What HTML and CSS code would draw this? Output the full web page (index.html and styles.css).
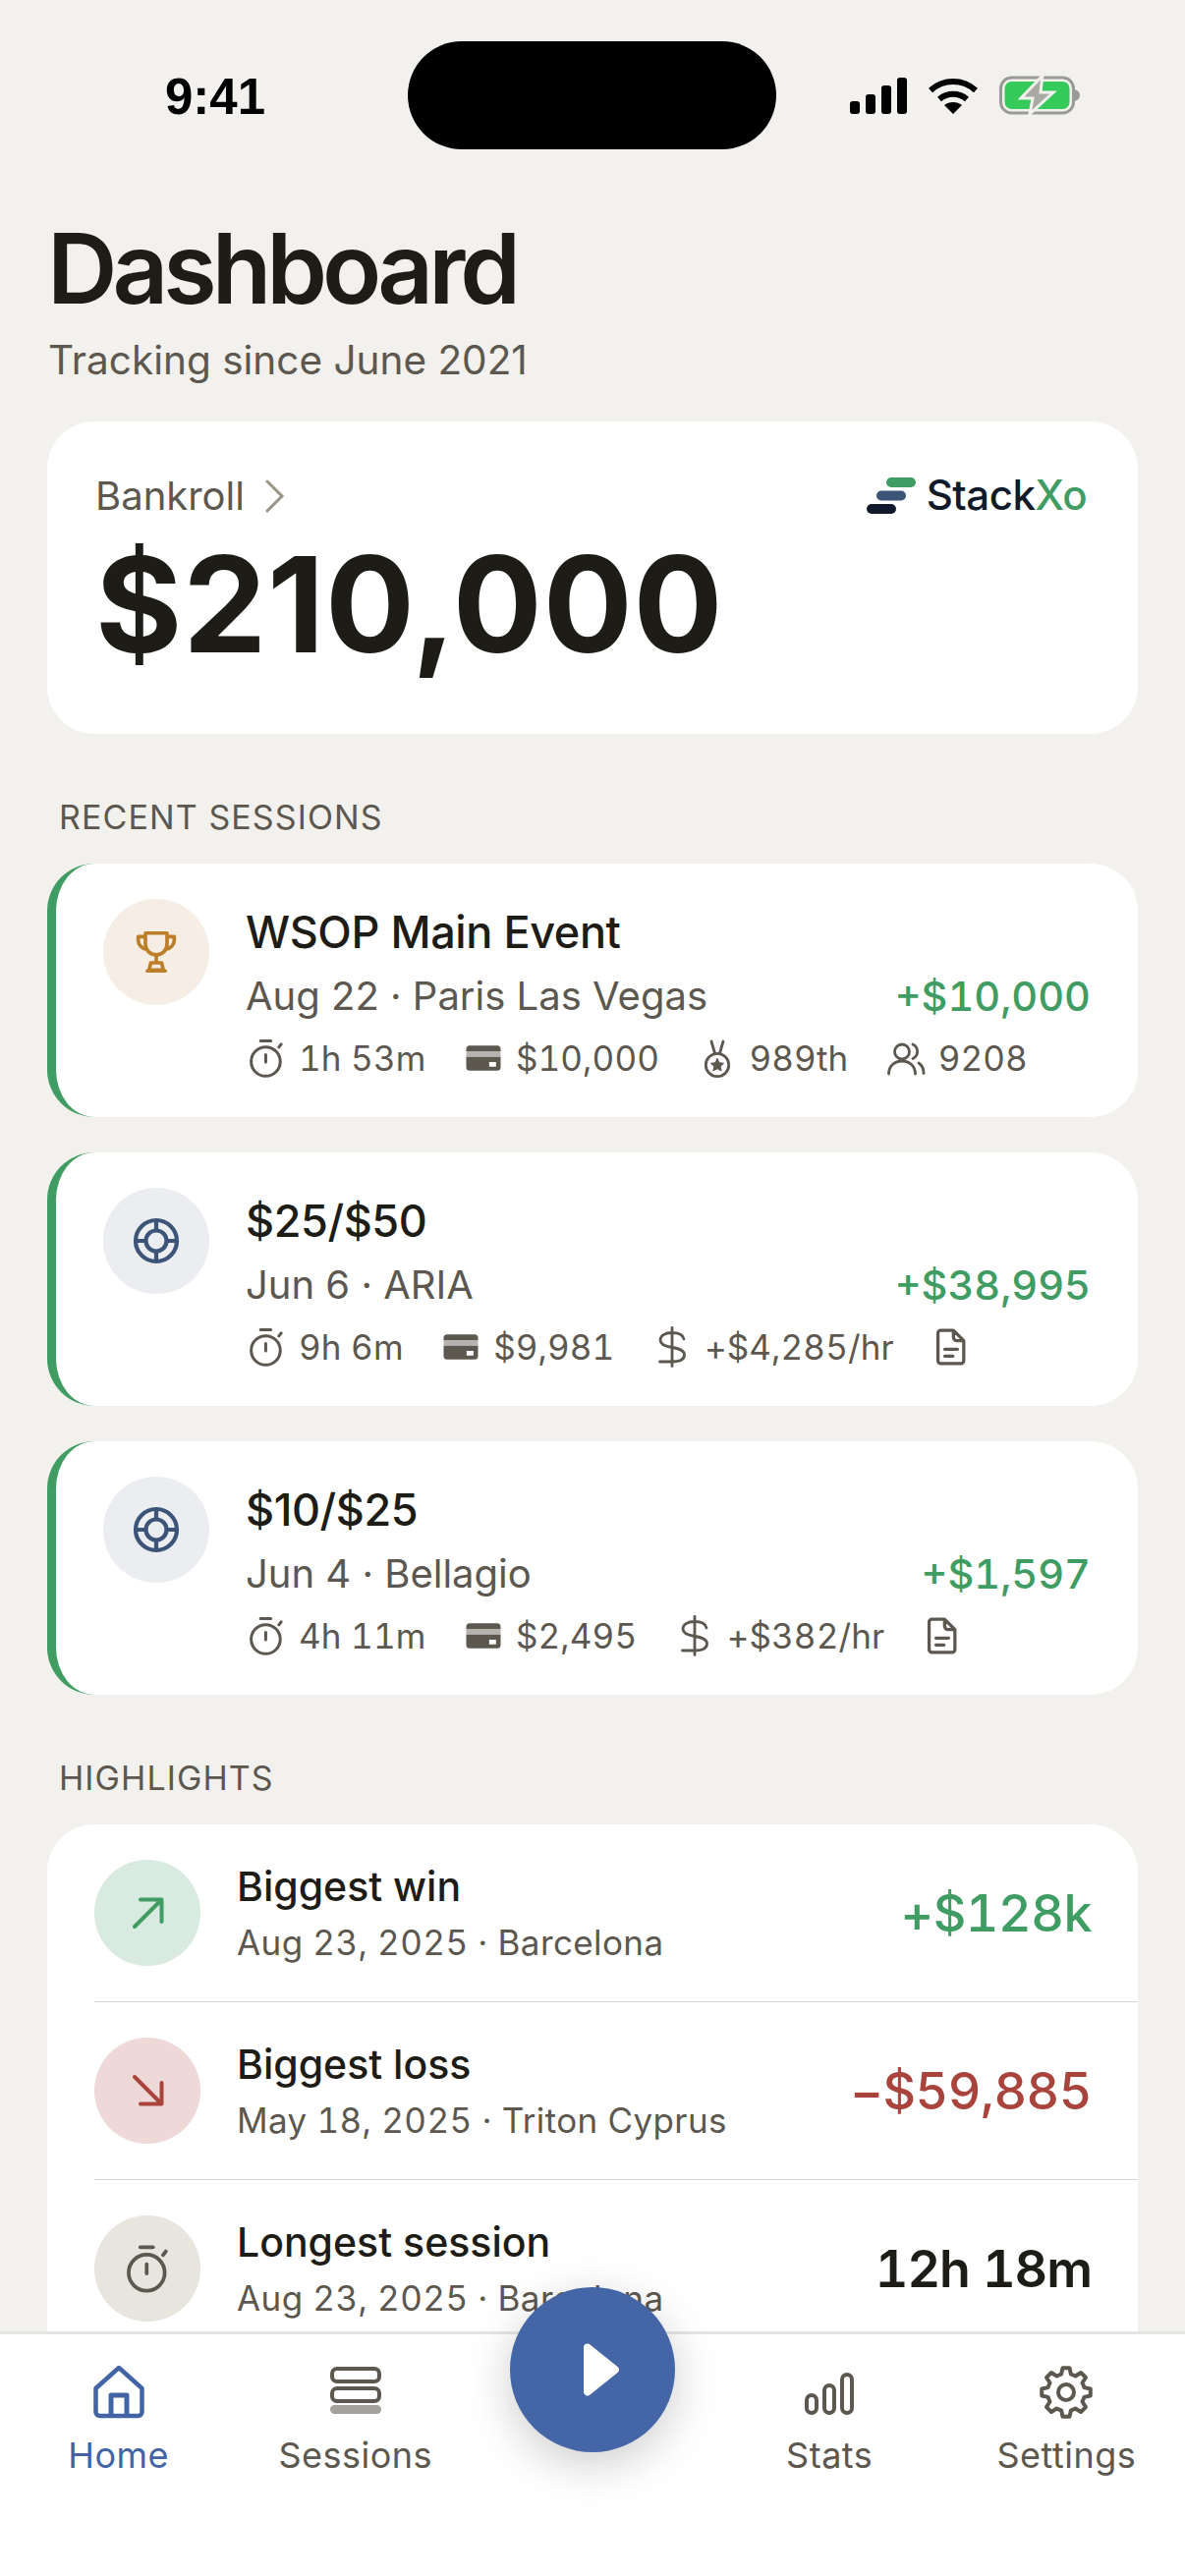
FILE: index.html
```html
<!DOCTYPE html>
<html lang="en">
<head>
  <meta charset="UTF-8" />
  <meta name="viewport" content="width=device-width, initial-scale=1.0"/>
  <title>Dashboard</title>
  <link rel="stylesheet" href="styles.css">
</head>
<body>
  <svg class="sprite" width="0" height="0">
    <symbol id="i-watch" viewBox="0 0 36 36" fill="none" stroke="currentColor" stroke-width="2.6" stroke-linecap="round">
      <circle cx="17.500" cy="21" r="12.700"/><path d="M13 3h9M17.500 15v6.500M29 8.500l2-2.600"/>
    </symbol>
    <symbol id="i-card" viewBox="0 0 36 36">
      <path fill="currentColor" fill-rule="evenodd" d="M3 10a3 3 0 0 1 3-3h24a3 3 0 0 1 3 3v2H3zM3 17h30v9a3 3 0 0 1-3 3H6a3 3 0 0 1-3-3zM23 21.500v4h6v-4z"/>
      <path fill="currentColor" opacity=".45" d="M3 12h30v5H3z"/>
    </symbol>
    <symbol id="i-medal" viewBox="0 0 42 42" fill="none" stroke="currentColor" stroke-width="2.800" stroke-linejoin="round" stroke-linecap="round">
      <path d="M15 4l3.500 12M27 4l-3.500 12"/><circle cx="21" cy="28" r="11.700"/>
      <path fill="currentColor" stroke-width="1" d="M21 21.500l2 4.200 4.500.6-3.300 3.100.9 4.500-4.100-2.200-4.100 2.200.9-4.500-3.300-3.100 4.500-.6z"/>
    </symbol>
    <symbol id="i-users" viewBox="0 0 42 42" fill="none" stroke="currentColor" stroke-width="2.800" stroke-linecap="round" stroke-linejoin="round">
      <circle cx="17" cy="14.500" r="7.500"/><path d="M3.500 37c0-8 6-13 13.500-13s13.500 5 13.500 13M28 7a8 8 0 0 1 0 14.500M34 26c3 2 5 6 5 10.500"/>
    </symbol>
    <symbol id="i-dollar" viewBox="0 0 36 42" fill="none" stroke="currentColor" stroke-width="2.800" stroke-linecap="round">
      <path d="M30 13c-1-4.500-5.500-6.500-12-6.500-7.500 0-12 3-12 7.500 0 5 5.500 6.500 12 7.500s12.500 2.500 12.500 7.500-5.500 7-12.500 7H5.500M18 1.500v39"/>
    </symbol>
    <symbol id="i-note" viewBox="0 0 36 36" fill="none" stroke="currentColor" stroke-width="2.800" stroke-linecap="round" stroke-linejoin="round">
      <path d="M9 3.500h11l9 9V30a2.500 2.500 0 0 1-2.500 2.500H9A2.500 2.500 0 0 1 6.500 30V6A2.500 2.500 0 0 1 9 3.500zM20 3.500v6a3 3 0 0 0 3 3h6M12.500 20h11M12.500 26h7"/>
    </symbol>
    <symbol id="i-target" viewBox="0 0 48 48" fill="none" stroke="currentColor" stroke-width="4.200">
      <circle cx="24" cy="24" r="21"/><circle cx="24" cy="24" r="10.500"/>
      <path d="M24 4v10M24 34v10M4 24h10M34 24h10"/>
    </symbol>
  </svg>

  <div class="phone">
    <header class="status-bar">
      <span class="status-time">9:41</span>
      <div class="island"></div>
      <div class="status-icons">
        <svg width="58" height="37" viewBox="0 0 58 37">
          <rect x="0" y="24" width="10" height="13" rx="3"/><rect x="16" y="17" width="10" height="20" rx="3"/>
          <rect x="32" y="8" width="10" height="29" rx="3"/><rect x="48" y="0" width="10" height="37" rx="3"/>
        </svg>
        <svg width="50" height="37" viewBox="0 0 50 37" fill="none" stroke="#000" stroke-width="6">
          <path d="M2 13c13-12 33-12 46 0M11 22c8-7 20-7 28 0"/>
          <path fill="#000" stroke="none" d="M25 37l-9-9c5-4 13-4 18 0z"/>
        </svg>
        <svg width="82" height="42" viewBox="0 0 82 42">
          <rect x="1.500" y="3" width="74" height="36" rx="11" fill="none" stroke="#9a9a96" stroke-width="3"/>
          <rect x="5.500" y="7" width="66" height="28" rx="7" fill="#34cb5b"/>
          <path d="M77 15c3 1 5 3 5 6s-2 5-5 6z" fill="#9a9a96"/>
          <path d="M44 1L22 24h12l-3 16 24-22H42z" fill="#aaa9a4" stroke="#f2f1ed" stroke-width="3"/>
        </svg>
      </div>
    </header>

    <main class="content">
      <h1>Dashboard</h1>
      <p class="subtitle">Tracking since June 2021</p>

      <section class="card bankroll">
        <div class="bankroll-top">
          <div class="bankroll-label">Bankroll
            <svg width="20" height="34" viewBox="0 0 20 34" fill="none" stroke="#9a9486" stroke-width="3" stroke-linecap="round"><path d="M2 2l15 15L2 32"/></svg>
          </div>
          <div class="logo">
            <svg width="50" height="37" viewBox="0 0 50 37">
              <rect x="20" y="0" width="30" height="10" rx="5" fill="#3f9c62"/>
              <rect x="10" y="13.500" width="30" height="10" rx="5" fill="#3b5478"/>
              <rect x="0" y="27" width="30" height="10" rx="5" fill="#101a2b"/>
            </svg>
            <span class="logo-text">Stack<span class="logo-accent">Xo</span></span>
          </div>
        </div>
        <div class="bankroll-amount">$210,000</div>
      </section>

      <h2 class="section-label first">RECENT SESSIONS</h2>

      <article class="card session">
        <div class="badge badge-gold">
          <svg width="44" height="44" viewBox="0 0 48 48" fill="none" stroke="currentColor" stroke-width="4" stroke-linecap="round" stroke-linejoin="round">
            <path d="M12 3h24v12c0 7-5 12-12 12S12 22 12 15zM12 7H4v4c0 5 4 9 9 10M36 7h8v4c0 5-4 9-9 10M24 27v8M18 36h12l2 8H16zM14 45h20"/>
          </svg>
        </div>
        <div class="session-body">
          <div class="session-title">WSOP Main Event</div>
          <div class="session-row">
            <span class="session-sub">Aug 22 · Paris Las Vegas</span>
            <span class="amount">+$10,000</span>
          </div>
          <div class="meta">
            <span class="meta-item"><svg class="ico"><use href="#i-watch"/></svg>1h 53m</span>
            <span class="meta-item"><svg class="ico"><use href="#i-card"/></svg>$10,000</span>
            <span class="meta-item"><svg class="ico"><use href="#i-medal"/></svg>989th</span>
            <span class="meta-item"><svg class="ico"><use href="#i-users"/></svg>9208</span>
          </div>
        </div>
      </article>

      <article class="card session">
        <div class="badge badge-blue"><svg width="48" height="48"><use href="#i-target"/></svg></div>
        <div class="session-body">
          <div class="session-title">$25/$50</div>
          <div class="session-row">
            <span class="session-sub">Jun 6 · ARIA</span>
            <span class="amount">+$38,995</span>
          </div>
          <div class="meta">
            <span class="meta-item"><svg class="ico"><use href="#i-watch"/></svg>9h 6m</span>
            <span class="meta-item"><svg class="ico"><use href="#i-card"/></svg>$9,981</span>
            <span class="meta-item"><svg class="ico"><use href="#i-dollar"/></svg>+$4,285/hr</span>
            <span class="meta-item"><svg class="ico"><use href="#i-note"/></svg></span>
          </div>
        </div>
      </article>

      <article class="card session">
        <div class="badge badge-blue"><svg width="48" height="48"><use href="#i-target"/></svg></div>
        <div class="session-body">
          <div class="session-title">$10/$25</div>
          <div class="session-row">
            <span class="session-sub">Jun 4 · Bellagio</span>
            <span class="amount">+$1,597</span>
          </div>
          <div class="meta">
            <span class="meta-item"><svg class="ico"><use href="#i-watch"/></svg>4h 11m</span>
            <span class="meta-item"><svg class="ico"><use href="#i-card"/></svg>$2,495</span>
            <span class="meta-item"><svg class="ico"><use href="#i-dollar"/></svg>+$382/hr</span>
            <span class="meta-item"><svg class="ico"><use href="#i-note"/></svg></span>
          </div>
        </div>
      </article>

      <h2 class="section-label">HIGHLIGHTS</h2>

      <section class="card highlights">
        <div class="hl-row">
          <div class="badge badge-win">
            <svg width="36" height="36" viewBox="0 0 36 36" fill="none" stroke="currentColor" stroke-width="4" stroke-linecap="round" stroke-linejoin="round"><path d="M5 32L32 5M11 4.500h21.500V27"/></svg>
          </div>
          <div class="hl-text">
            <div class="hl-title">Biggest win</div>
            <div class="hl-sub">Aug 23, 2025 · Barcelona</div>
          </div>
          <div class="hl-value win">+$128k</div>
        </div>
        <div class="hl-row">
          <div class="badge badge-loss">
            <svg width="36" height="36" viewBox="0 0 36 36" fill="none" stroke="currentColor" stroke-width="4" stroke-linecap="round" stroke-linejoin="round"><path d="M5 4l27 27M32.500 10v21.500H11"/></svg>
          </div>
          <div class="hl-text">
            <div class="hl-title">Biggest loss</div>
            <div class="hl-sub">May 18, 2025 · Triton Cyprus</div>
          </div>
          <div class="hl-value loss">−$59,885</div>
        </div>
        <div class="hl-row">
          <div class="badge badge-grey">
            <svg width="52" height="52" viewBox="0 0 36 36"><use href="#i-watch"/></svg>
          </div>
          <div class="hl-text">
            <div class="hl-title">Longest session</div>
            <div class="hl-sub">Aug 23, 2025 · Barcelona</div>
          </div>
          <div class="hl-value">12h 18m</div>
        </div>
      </section>
    </main>

    <!-- Bottom tab bar -->
    <nav class="tabbar">
      <a class="tab active">
        <svg width="56" height="56" viewBox="0 0 56 56" fill="none" stroke="currentColor" stroke-width="4.500" stroke-linejoin="round">
          <path d="M28 3L4.500 24v24a4 4 0 0 0 4 4h39a4 4 0 0 0 4-4V24z"/><path stroke-width="5" d="M20 52V31h16v21"/>
        </svg>
        Home
      </a>
      <a class="tab">
        <svg width="56" height="56" viewBox="0 0 56 56" fill="none" stroke="currentColor" stroke-width="4">
          <rect x="4" y="4" width="48" height="13" rx="5"/><rect x="4" y="24" width="48" height="13" rx="5"/>
          <rect x="2" y="41" width="52" height="9" rx="4.500" fill="#a3a19b" stroke="none"/>
        </svg>
        Sessions
      </a>
      <div class="tab-spacer"></div>
      <a class="tab">
        <svg width="56" height="56" viewBox="0 0 56 56" fill="none" stroke="currentColor" stroke-width="4">
          <rect x="5" y="31" width="10" height="18" rx="5"/><rect x="23" y="21" width="10" height="28" rx="5"/><rect x="41" y="10" width="10" height="39" rx="5"/>
        </svg>
        Stats
      </a>
      <a class="tab">
        <svg width="56" height="56" viewBox="0 0 56 56" fill="none" stroke="currentColor" stroke-width="4" stroke-linejoin="round">
          <circle cx="28" cy="28" r="8"/>
          <path d="M23.080 9.650L24.520 3.240H31.480L32.920 9.650A19 19 0 0 1 37.500 11.550L43.050 8.030 47.970 12.950 44.450 18.500A19 19 0 0 1 46.350 23.080L52.760 24.520V31.480L46.350 32.920A19 19 0 0 1 44.450 37.500L47.970 43.050 43.050 47.970 37.500 44.450A19 19 0 0 1 32.920 46.350L31.480 52.760H24.520L23.080 46.350A19 19 0 0 1 18.500 44.450L12.950 47.970 8.030 43.050 11.550 37.500A19 19 0 0 1 9.650 32.920L3.240 31.480V24.520L9.650 23.080A19 19 0 0 1 11.550 18.500L8.030 12.950 12.950 8.030 18.500 11.550A19 19 0 0 1 23.080 9.650Z"/>
        </svg>
        Settings
      </a>
      <div class="fab">
        <svg width="36" height="54" viewBox="0 0 36 54"><path fill="#fff" stroke="#fff" stroke-width="8" stroke-linejoin="round" d="M4 4.500L32 27 4 49.500z"/></svg>
      </div>
    </nav>
  </div>
</body>
</html>
```

FILE: styles.css
```css
/* General Styles */
* {
  box-sizing: border-box;
}

body {
  margin: 0;
  background-color: #f2f1ed;
  font-family: Inter, "Noto Sans", sans-serif;
  color: #1d1c16;
}

.sprite {
  display: block;
  height: 0;
}

.phone {
  position: relative;
  width: 1206px;
  height: 2622px;
  overflow: hidden;
  background-color: #f2f1ed;
}

/* Status Bar */
.status-bar {
  height: 206px;
  padding-top: 42px;
  display: flex;
  align-items: flex-start;
}

.status-time {
  width: 415px;
  padding-top: 30px;
  text-align: center;
  padding-left: 23px;
  font-family: "Liberation Sans", sans-serif;
  font-size: 51px;
  line-height: 54px;
  font-weight: 700;
  color: #000;
}

.island {
  width: 375px;
  height: 110px;
  border-radius: 55px;
  background-color: #000;
}

.status-icons {
  margin-left: 75px;
  margin-top: 34px;
  display: flex;
  align-items: center;
  gap: 22px;
}

/* Page Content */
.content {
  padding: 0 48px;
}

h1 {
  margin: 0;
  padding-top: 5px;
  font-size: 99px;
  line-height: 124px;
  font-weight: 600;
  letter-spacing: -5px;
}

.subtitle {
  margin: 6px 0 0 1px;
  font-size: 40.500px;
  line-height: 52px;
  color: #5c574f;
}

.card {
  background-color: #fff;
  border-radius: 48px;
}

/* Bankroll */
.bankroll {
  margin-top: 36px;
  height: 318px;
  padding: 48px 52px 0 49px;
}

.bankroll-top {
  display: flex;
  justify-content: space-between;
  align-items: center;
}

.bankroll-label {
  display: flex;
  align-items: center;
  gap: 21px;
  padding-top: 2px;
  font-size: 40px;
  line-height: 52px;
  color: #5c574f;
}

.logo {
  display: flex;
  align-items: center;
  gap: 11px;
}

.logo-text {
  font-size: 42px;
  line-height: 52px;
  font-weight: 500;
  letter-spacing: -0.5px;
  color: #101a2b;
}

.logo-accent {
  color: #3f9c62;
}

.bankroll-amount {
  margin-top: 4px;
  font-size: 135px;
  line-height: 160px;
  font-weight: 700;
  letter-spacing: 0.8px;
}

/* Section Labels */
.section-label {
  margin: 65px 0 27px 12px;
  font-size: 34px;
  line-height: 40px;
  font-weight: 400;
  letter-spacing: 1.1px;
  color: #5c574f;
}

/* Session Cards */
.session {
  height: 258px;
  margin-bottom: 36px;
  padding: 36px 48px 0 48px;
  border-left: 9px solid #3f9c62;
  display: flex;
  gap: 37px;
}

.session:last-of-type {
  margin-bottom: 0;
}

.badge {
  flex-shrink: 0;
  width: 108px;
  height: 108px;
  border-radius: 50%;
  display: flex;
  align-items: center;
  justify-content: center;
}

.badge-gold {
  background-color: #f6eee4;
  color: #bd7e2a;
}

.badge-blue {
  background-color: #ebedf1;
  color: #3b5478;
}

.badge-win {
  background-color: #d9ebe0;
  color: #3f9c62;
}

.badge-loss {
  background-color: #eed8d8;
  color: #a8443b;
}

.badge-grey {
  background-color: #e7e5de;
  color: #5c574f;
}

.session-body {
  flex: 1;
  min-width: 0;
}

.session-title {
  font-size: 45px;
  line-height: 68px;
  font-weight: 500;
  letter-spacing: -0.4px;
}

.session-row {
  display: flex;
  justify-content: space-between;
  align-items: center;
  line-height: 62px;
}

.session-sub {
  font-size: 40px;
  color: #5c574f;
}

.amount {
  font-size: 41.500px;
  font-weight: 500;
  font-variant-numeric: tabular-nums;
  color: #3f9c62;
}

.meta {
  margin-top: 9px;
  display: flex;
  gap: 37.500px;
  font-size: 35px;
  line-height: 46px;
  letter-spacing: 0.1px;
  font-variant-numeric: tabular-nums;
  color: #5c574f;
}

.meta-item {
  display: flex;
  align-items: center;
  gap: 12px;
}

.ico {
  width: 42px;
  height: 42px;
  flex-shrink: 0;
}

/* Highlights */
.highlights {
  padding-left: 48px;
  height: 600px;
}

.hl-row {
  height: 181px;
  padding-right: 47px;
  border-bottom: 1px solid #d8d8d6;
  display: flex;
  align-items: center;
}

.hl-text {
  flex: 1;
  margin-left: 37px;
  padding-bottom: 3px;
}

.hl-title {
  font-size: 41px;
  line-height: 56px;
  font-weight: 500;
}

.hl-sub {
  margin-top: 6px;
  font-size: 35px;
  line-height: 46px;
  letter-spacing: 0.4px;
  font-variant-numeric: tabular-nums;
  color: #5c574f;
}

.hl-value {
  font-size: 52px;
  font-weight: 600;
  letter-spacing: -1px;
  font-variant-numeric: tabular-nums;
}

.hl-value.win {
  font-weight: 500;
  letter-spacing: -0.5px;
  color: #3f9c62;
}

.hl-value.loss {
  font-weight: 500;
  letter-spacing: -0.5px;
  color: #a8443b;
}

/* Tab Bar */
.tabbar {
  position: absolute;
  left: 0;
  right: 0;
  bottom: 0;
  height: 249px;
  padding-top: 31px;
  background-color: #fff;
  border-top: 3px solid #e5e5e3;
  display: grid;
  grid-template-columns: repeat(5, 1fr);
}

.tab {
  display: flex;
  flex-direction: column;
  align-items: center;
  gap: 13px;
  font-size: 36px;
  line-height: 46px;
  letter-spacing: 0.5px;
  color: #5c574f;
}

.tab.active {
  color: #4264a5;
}

.fab {
  position: absolute;
  left: 519px;
  top: -48px;
  width: 168px;
  height: 168px;
  border-radius: 50%;
  background-color: #4465a6;
  box-shadow: 0 12px 48px rgba(0, 0, 0, 0.2);
  display: flex;
  align-items: center;
  justify-content: center;
  padding-left: 18px;
}
```
